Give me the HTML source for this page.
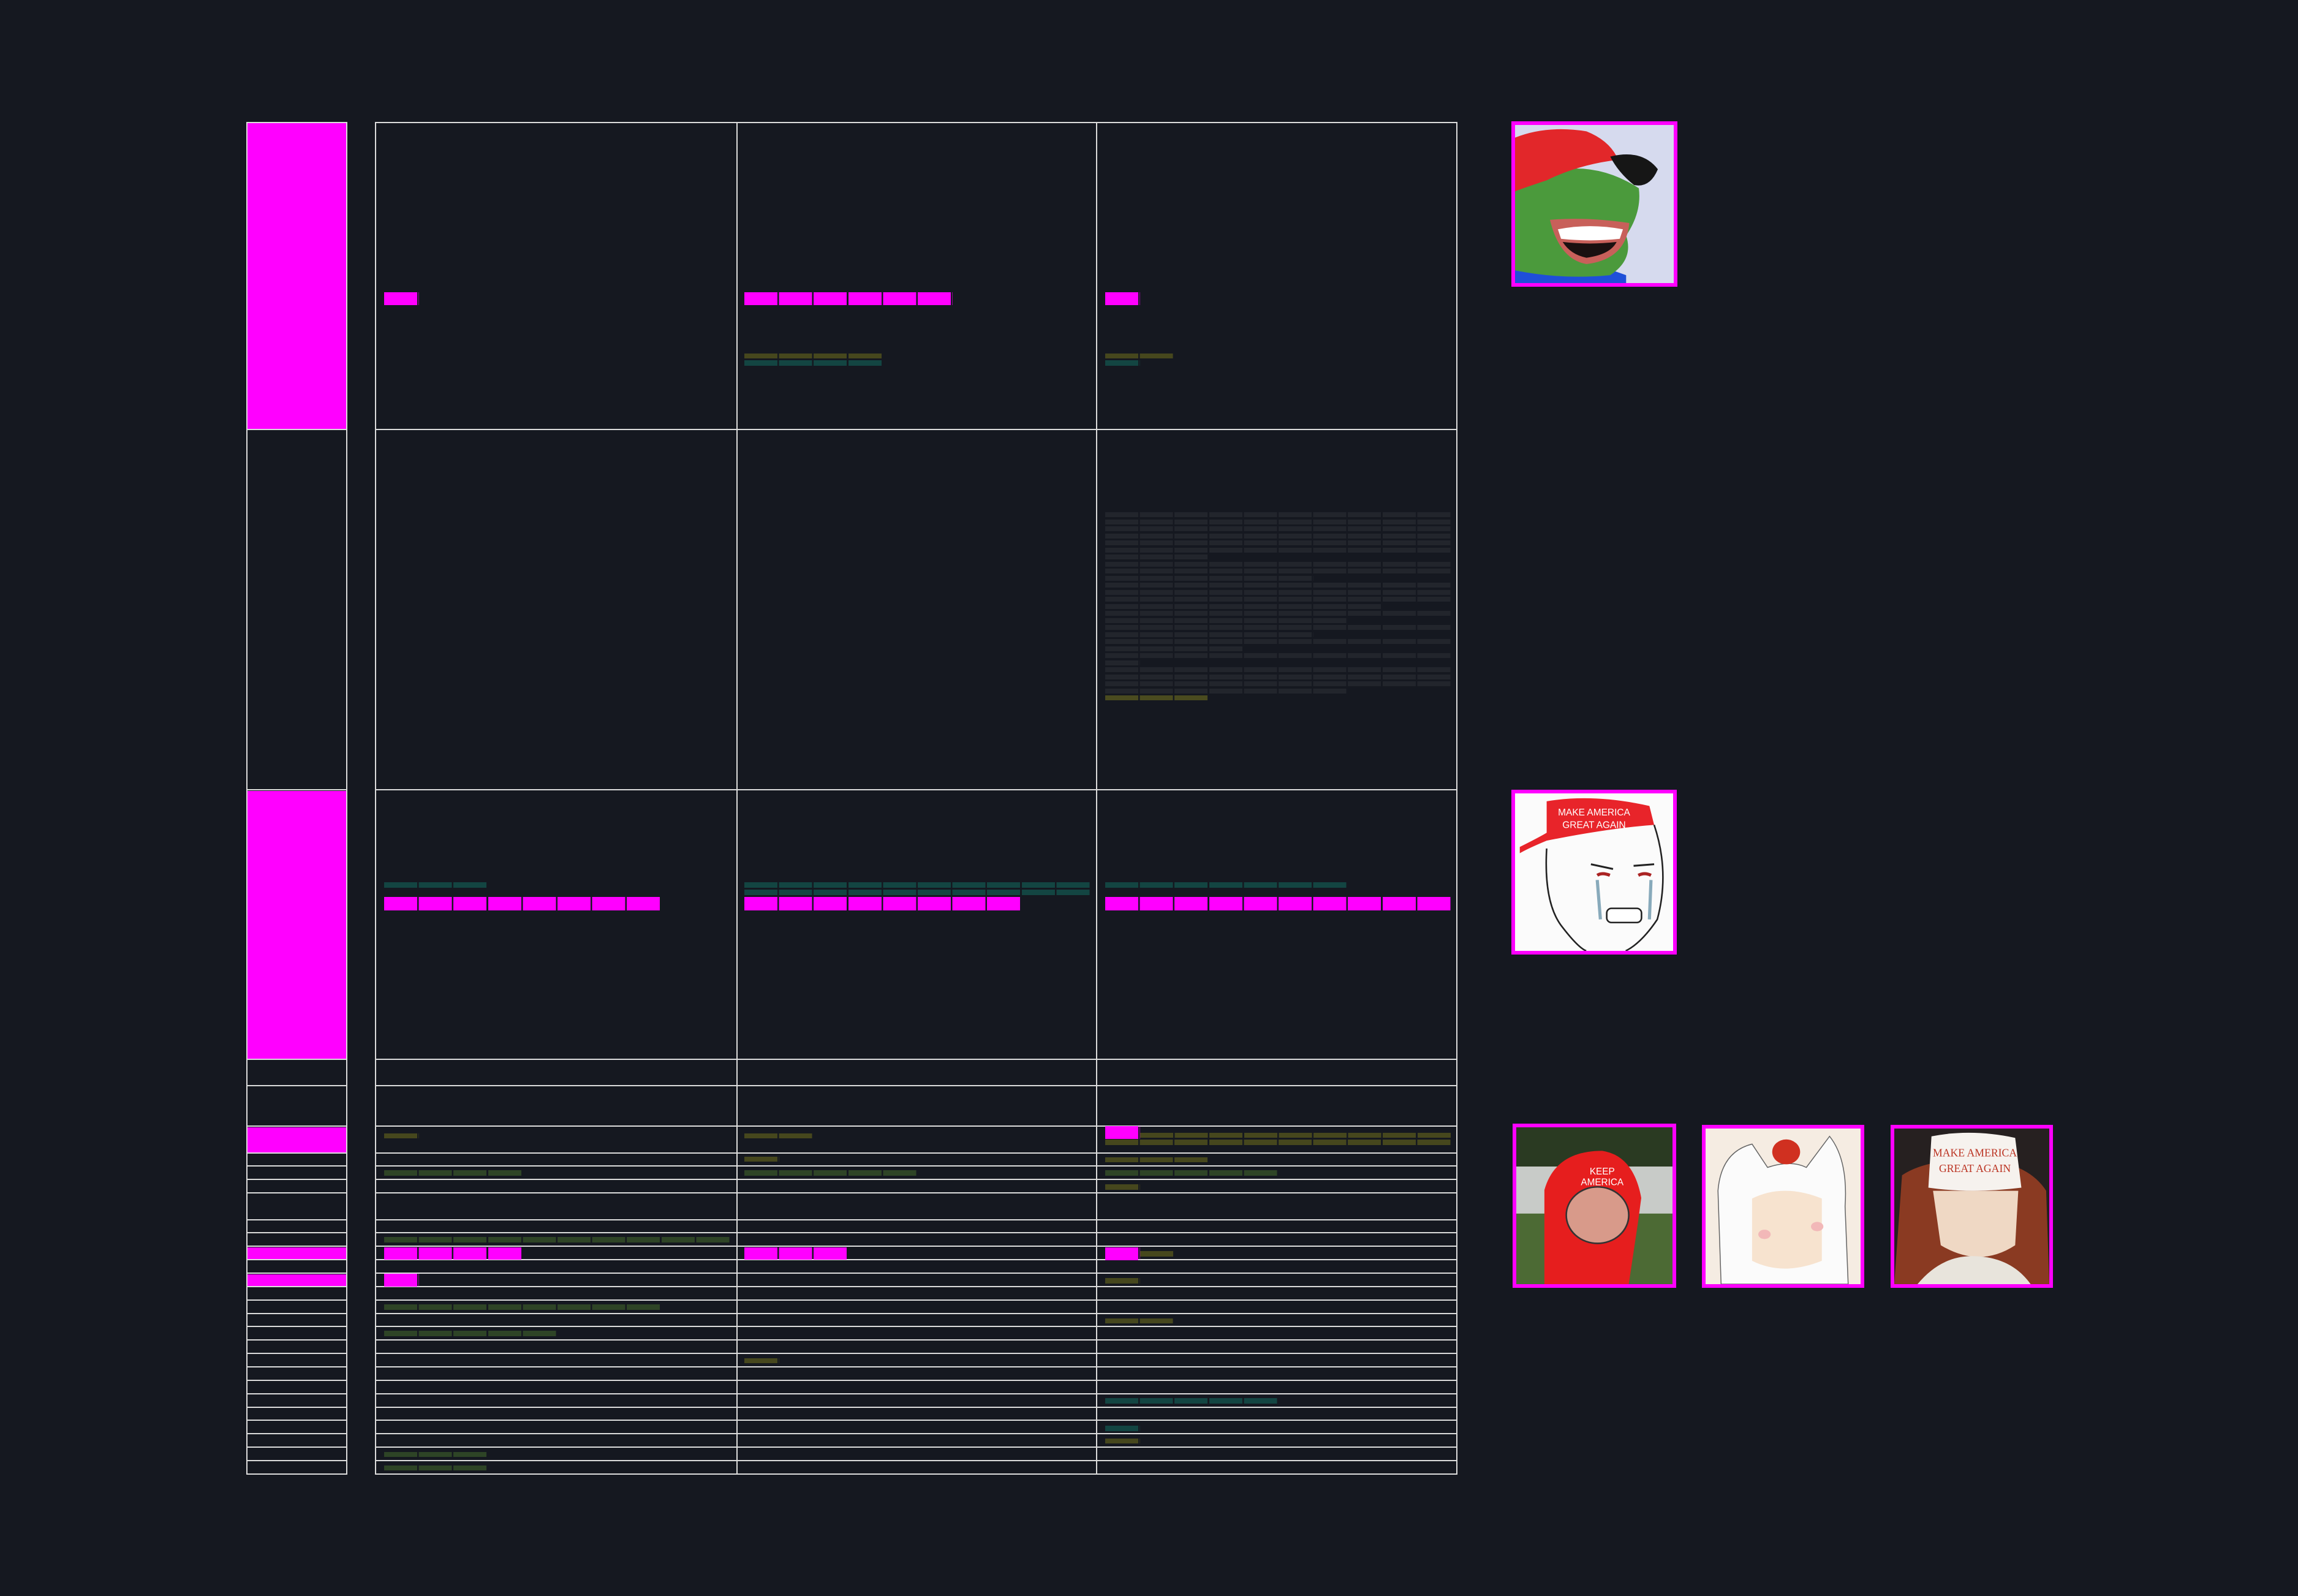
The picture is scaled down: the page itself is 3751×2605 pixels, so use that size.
<!DOCTYPE html>
<html><head><meta charset="utf-8"><style>
html,body{margin:0;padding:0}
body{width:3751px;height:2605px;background:#151820;position:relative;overflow:hidden;font-family:"Liberation Sans",sans-serif}
div{position:absolute;box-sizing:border-box}
.h{left:402px;width:1977px;height:2px;background:linear-gradient(90deg,#dcdcdc 0 165px,transparent 165px 210px,#dcdcdc 210px)}
.v{top:199px;height:2208px;width:2px;background:#dcdcdc}
.mf{left:404px;width:162px;background:#ff00ff}
.c{height:8px}
.m{height:21px;background:repeating-linear-gradient(90deg,#ff00ff 0 54px,transparent 54px 56.6px)}
.o{background:repeating-linear-gradient(90deg,#46471d 0 54px,transparent 54px 56.6px)}
.g{background:repeating-linear-gradient(90deg,#2e4426 0 54px,transparent 54px 56.6px)}
.t{height:9px;background:repeating-linear-gradient(90deg,#134542 0 54px,transparent 54px 56.6px)}
.k{background:repeating-linear-gradient(90deg,#22252c 0 54px,transparent 54px 56.6px)}
.f{border:6px solid #ff00ff;overflow:hidden}
.f svg{display:block;width:100%;height:100%}
</style></head><body>

<!-- magenta fills left column -->
<div class="mf" style="top:201px;height:500px"></div>
<div class="mf" style="top:1291px;height:438px"></div>
<div class="mf" style="top:1840px;height:42px"></div>
<div class="mf" style="top:2036px;height:20px"></div>
<div class="mf" style="top:2080px;height:20px"></div>

<!-- lines -->
<div class="h" style="top:199px"></div><div class="h" style="top:700px"></div><div class="h" style="top:1288px"></div>
<div class="h" style="top:1728px"></div><div class="h" style="top:1771px"></div><div class="h" style="top:1837px"></div>
<div class="h" style="top:1881px"></div><div class="h" style="top:1902px"></div><div class="h" style="top:1924px"></div>
<div class="h" style="top:1946px"></div><div class="h" style="top:1990px"></div><div class="h" style="top:2011px"></div>
<div class="h" style="top:2033px"></div><div class="h" style="top:2055px"></div><div class="h" style="top:2077px"></div>
<div class="h" style="top:2099px"></div><div class="h" style="top:2121px"></div><div class="h" style="top:2143px"></div>
<div class="h" style="top:2164px"></div><div class="h" style="top:2186px"></div><div class="h" style="top:2208px"></div>
<div class="h" style="top:2230px"></div><div class="h" style="top:2252px"></div><div class="h" style="top:2274px"></div>
<div class="h" style="top:2296px"></div><div class="h" style="top:2317px"></div><div class="h" style="top:2339px"></div>
<div class="h" style="top:2361px"></div><div class="h" style="top:2383px"></div><div class="h" style="top:2405px"></div>
<div class="v" style="left:402px"></div><div class="v" style="left:565px"></div>
<div class="v" style="left:612px"></div><div class="v" style="left:1202px"></div>
<div class="v" style="left:1789px"></div><div class="v" style="left:2377px"></div>

<!-- row 1 -->
<div class="m" style="left:627px;top:477px;width:56.6px"></div>
<div class="m" style="left:1215px;top:477px;width:339.6px"></div>
<div class="c o" style="left:1215px;top:577px;width:226.4px"></div>
<div class="t" style="left:1215px;top:588px;width:226.4px"></div>
<div class="m" style="left:1804px;top:477px;width:56.6px"></div>
<div class="c o" style="left:1804px;top:577px;width:113.2px"></div>
<div class="t" style="left:1804px;top:588px;width:56.6px"></div>

<!-- row 2 grid col3 -->
<div class="c k" style="left:1804px;top:836px;width:566px"></div>
<div class="c k" style="left:1804px;top:847.5px;width:566px"></div>
<div class="c k" style="left:1804px;top:859px;width:566px"></div>
<div class="c k" style="left:1804px;top:870.5px;width:566px"></div>
<div class="c k" style="left:1804px;top:882px;width:566px"></div>
<div class="c k" style="left:1804px;top:893.5px;width:566px"></div>
<div class="c k" style="left:1804px;top:905px;width:169.8px"></div>
<div class="c k" style="left:1804px;top:916.5px;width:566px"></div>
<div class="c k" style="left:1804px;top:928px;width:566px"></div>
<div class="c k" style="left:1804px;top:939.5px;width:339.6px"></div>
<div class="c k" style="left:1804px;top:951px;width:566px"></div>
<div class="c k" style="left:1804px;top:962.5px;width:566px"></div>
<div class="c k" style="left:1804px;top:974px;width:566px"></div>
<div class="c k" style="left:1804px;top:985.5px;width:452.8px"></div>
<div class="c k" style="left:1804px;top:997px;width:566px"></div>
<div class="c k" style="left:1804px;top:1008.5px;width:396.2px"></div>
<div class="c k" style="left:1804px;top:1020px;width:566px"></div>
<div class="c k" style="left:1804px;top:1031.5px;width:339.6px"></div>
<div class="c k" style="left:1804px;top:1043px;width:566px"></div>
<div class="c k" style="left:1804px;top:1054.5px;width:226.4px"></div>
<div class="c k" style="left:1804px;top:1066px;width:566px"></div>
<div class="c k" style="left:1804px;top:1077.5px;width:56.6px"></div>
<div class="c k" style="left:1804px;top:1089px;width:566px"></div>
<div class="c k" style="left:1804px;top:1100.5px;width:566px"></div>
<div class="c k" style="left:1804px;top:1112px;width:566px"></div>
<div class="c k" style="left:1804px;top:1123.5px;width:396.2px"></div>
<div class="c o" style="left:1804px;top:1135px;width:169.8px;background:repeating-linear-gradient(90deg,#4a4b1f 0 54px,transparent 54px 56.6px)"></div>

<!-- row 3 -->
<div class="t" style="left:627px;top:1440px;width:169.8px"></div>
<div class="m" style="left:627px;top:1464px;width:452.8px;height:22px"></div>
<div class="t" style="left:1215px;top:1440px;width:566px"></div>
<div class="t" style="left:1215px;top:1452px;width:566px"></div>
<div class="m" style="left:1215px;top:1464px;width:452.8px;height:22px"></div>
<div class="t" style="left:1804px;top:1440px;width:396.2px"></div>
<div class="m" style="left:1804px;top:1464px;width:566px;height:22px"></div>

<!-- lower rows col1 -->
<div class="c o" style="left:627px;top:1850px;width:56.6px"></div>
<div class="c g" style="left:627px;top:1910px;width:226.4px;height:9px"></div>
<div class="c g" style="left:627px;top:2019px;width:566px;height:9px"></div>
<div class="m" style="left:627px;top:2036px;width:226.4px;height:20px"></div>
<div class="m" style="left:627px;top:2079px;width:56.6px;height:21px"></div>
<div class="c g" style="left:627px;top:2129px;width:452.8px;height:9px"></div>
<div class="c g" style="left:627px;top:2172px;width:283px;height:9px"></div>
<div class="c g" style="left:627px;top:2370px;width:169.8px"></div>
<div class="c g" style="left:627px;top:2392px;width:169.8px"></div>

<!-- lower rows col2 -->
<div class="c o" style="left:1215px;top:1850px;width:113.2px"></div>
<div class="c o" style="left:1215px;top:1888px;width:56.6px"></div>
<div class="c g" style="left:1215px;top:1910px;width:283px;height:9px"></div>
<div class="m" style="left:1215px;top:2036px;width:169.8px;height:20px"></div>
<div class="c o" style="left:1215px;top:2217px;width:56.6px"></div>

<!-- lower rows col3 -->
<div class="m" style="left:1804px;top:1838px;width:56.6px"></div>
<div class="c o" style="left:1860.6px;top:1849px;width:509.4px"></div>
<div class="c o" style="left:1804px;top:1860px;width:566px;height:9px"></div>
<div class="c o" style="left:1804px;top:1889px;width:169.8px"></div>
<div class="c g" style="left:1804px;top:1910px;width:283px;height:9px"></div>
<div class="c o" style="left:1804px;top:1933px;width:56.6px;height:9px"></div>
<div class="m" style="left:1804px;top:2036px;width:56.6px"></div>
<div class="c o" style="left:1860.6px;top:2042px;width:56.6px;height:9px"></div>
<div class="c o" style="left:1804px;top:2086px;width:56.6px;height:9px"></div>
<div class="c o" style="left:1804px;top:2152px;width:113.2px"></div>
<div class="t" style="left:1804px;top:2282px;width:283px"></div>
<div class="t" style="left:1804px;top:2327px;width:56.6px"></div>
<div class="c o" style="left:1804px;top:2348px;width:56.6px"></div>

<!-- images -->
<div class="f" style="left:2467px;top:198px;width:271px;height:270px">
<svg viewBox="0 0 100 100" preserveAspectRatio="none">
<rect width="100" height="100" fill="#d6daee"/>
<path d="M0 90 Q30 80 70 95 L70 100 L0 100Z" fill="#1f4fd8"/>
<path d="M0 35 Q10 30 30 28 Q55 25 78 40 Q80 55 70 70 Q75 85 60 95 Q30 98 0 92Z" fill="#4b9a3c"/>
<path d="M0 8 Q20 0 45 4 Q60 10 65 22 Q40 25 20 35 Q5 40 0 42Z" fill="#e2272a"/>
<path d="M60 20 Q80 15 90 28 Q85 40 75 38 Q65 30 60 20Z" fill="#161616"/>
<path d="M22 60 Q45 58 72 62 Q70 85 45 88 Q28 85 22 60Z" fill="#c8605a"/>
<path d="M27 66 Q47 62 68 66 L66 72 Q47 74 29 72Z" fill="#fff"/>
<path d="M30 74 Q47 76 64 74 Q60 82 45 84 Q35 82 30 74Z" fill="#1a1010"/>
</svg></div>

<div class="f" style="left:2467px;top:1289px;width:270px;height:269px">
<svg viewBox="0 0 100 100" preserveAspectRatio="none">
<rect width="100" height="100" fill="#fbfbfb"/>
<path d="M20 5 Q50 0 85 8 L88 20 Q60 22 20 30 Q8 35 3 38 L3 34 Q15 28 20 25Z" fill="#e8242a"/>
<text x="50" y="14" font-size="6" fill="#fff" text-anchor="middle" font-family="Liberation Sans">MAKE AMERICA</text>
<text x="50" y="22" font-size="6" fill="#fff" text-anchor="middle" font-family="Liberation Sans">GREAT AGAIN</text>
<path d="M20 35 Q18 70 30 85 Q40 98 45 100 M88 20 Q98 50 90 80 Q80 95 70 100" fill="none" stroke="#222" stroke-width="1"/>
<path d="M48 45 L62 48 M75 46 L88 45" stroke="#222" stroke-width="1.2"/>
<path d="M52 52 Q55 50 60 52 M78 52 Q82 50 86 52" stroke="#a22" stroke-width="2" fill="none"/>
<path d="M52 55 L54 80 M86 55 L85 80" stroke="#8ab" stroke-width="2"/>
<rect x="58" y="73" width="22" height="9" rx="3" fill="#fff" stroke="#222" stroke-width="1"/>
</svg></div>

<div class="f" style="left:2469px;top:1834px;width:267px;height:268px">
<svg viewBox="0 0 100 100" preserveAspectRatio="none">
<rect width="100" height="100" fill="#3c5a2e"/>
<rect width="100" height="25" fill="#2a3a22"/>
<rect y="25" width="100" height="35" fill="#c8cbc8"/>
<rect y="55" width="100" height="45" fill="#4c6a34"/>
<path d="M18 100 L18 40 Q25 15 55 15 Q75 18 80 45 L78 60 L72 100Z" fill="#e61e1e"/>
<ellipse cx="52" cy="56" rx="20" ry="18" fill="#d89a8a" stroke="#333"/>
<text x="55" y="30" font-size="6" fill="#fff" text-anchor="middle" font-family="Liberation Sans">KEEP</text>
<text x="55" y="37" font-size="6" fill="#fff" text-anchor="middle" font-family="Liberation Sans">AMERICA</text>
</svg></div>

<div class="f" style="left:2778px;top:1836px;width:265px;height:266px">
<svg viewBox="0 0 100 100" preserveAspectRatio="none">
<rect width="100" height="100" fill="#f5ece2"/>
<path d="M10 100 L8 40 Q10 15 30 10 L40 25 Q55 20 65 25 L80 5 Q92 20 90 50 L92 100Z" fill="#fbfbfb" stroke="#666" stroke-width="0.6"/>
<path d="M30 45 Q50 35 75 45 L75 85 Q50 95 30 85Z" fill="#f7e3cf"/>
<ellipse cx="52" cy="15" rx="9" ry="8" fill="#d03020"/>
<ellipse cx="38" cy="68" rx="4" ry="3" fill="#f2b8b8"/><ellipse cx="72" cy="63" rx="4" ry="3" fill="#f2b8b8"/>
</svg></div>

<div class="f" style="left:3086px;top:1836px;width:265px;height:266px">
<svg viewBox="0 0 100 100" preserveAspectRatio="none">
<rect width="100" height="100" fill="#262020"/>
<path d="M0 100 L5 30 Q20 20 50 20 Q85 20 98 40 L100 100Z" fill="#8a3a22"/>
<path d="M25 40 L80 40 L78 75 Q55 90 30 75Z" fill="#efd8c4"/>
<path d="M15 100 Q30 82 50 82 Q75 82 88 100Z" fill="#e8e4dc"/>
<path d="M24 5 Q50 0 78 6 L82 38 Q50 42 22 38Z" fill="#f6f2ee"/>
<text x="52" y="18" font-size="7" fill="#b32" text-anchor="middle" font-family="Liberation Serif">MAKE AMERICA</text>
<text x="52" y="28" font-size="7" fill="#b32" text-anchor="middle" font-family="Liberation Serif">GREAT AGAIN</text>
</svg></div>

</body></html>
